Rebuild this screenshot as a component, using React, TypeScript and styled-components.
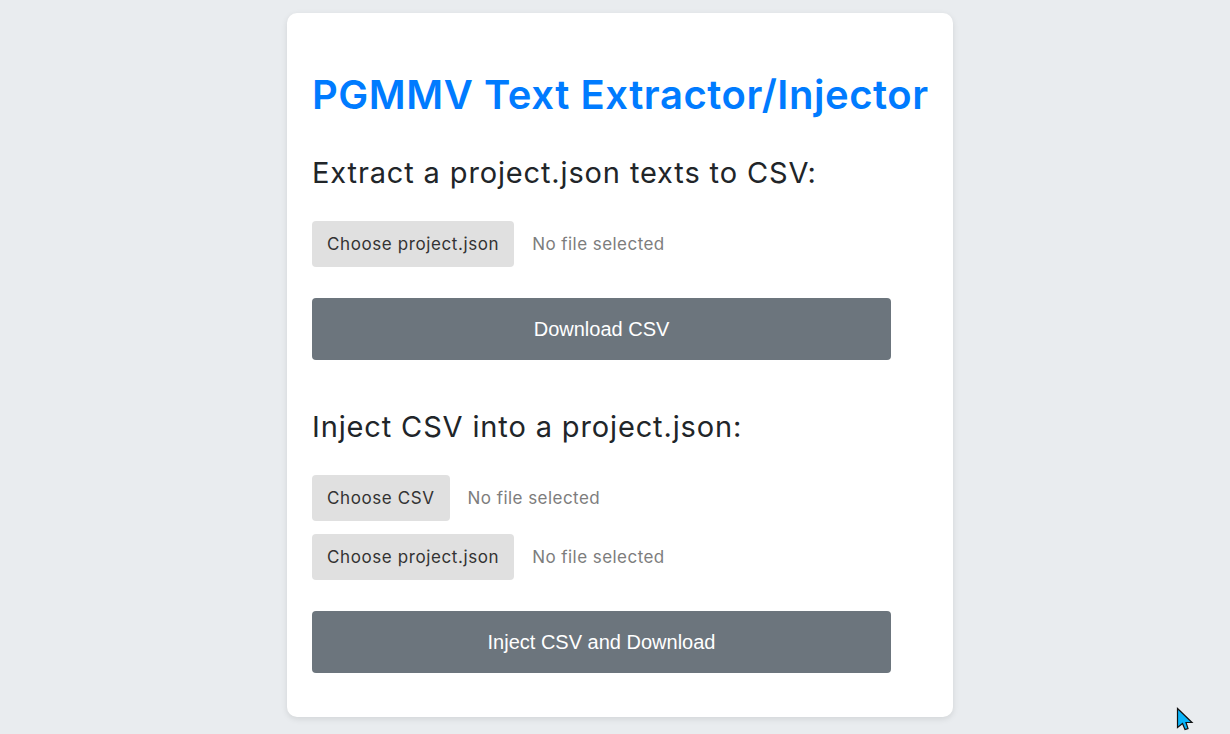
import React from "react";
import styled, { createGlobalStyle } from "styled-components";

const Global = createGlobalStyle`
  html, body { margin: 0; padding: 0; height: 100%; background: #e9ecef; overflow: hidden; }
  body { font-family: "Inter", "Open Sans", sans-serif; }
`;
const Page = styled.div`
  position: relative; width: 1230px; height: 734px; padding: 13px 0 0 10px; box-sizing: border-box;
  display: flex; flex-direction: column; align-items: center;
`;
const Card = styled.main`
  width: 666px; height: 704px; box-sizing: border-box; background: #fff; border-radius: 10px;
  box-shadow: 0 2px 6px rgba(0,0,0,.1); padding: 0 25px;
  display: flex; flex-direction: column; align-items: flex-start;
`;
const Title = styled.h1`
  margin: 54px 0 0; height: 56px; line-height: 56px; font-size: 40px; font-weight: 600; letter-spacing: 0.55px; color: #007bff; white-space: nowrap;
`;
const Heading = styled.h2<{ $top: number }>`
  margin: ${p => p.$top}px 0 0; height: 44px; line-height: 44px; font-size: 29px; font-weight: 400; letter-spacing: 0.86px; color: #212529; white-space: nowrap;
`;
const FileRow = styled.label<{ $top: number }>`
  margin-top: ${p => p.$top}px; display: flex; align-items: center; gap: 18px; height: 46px;
`;
const Choose = styled.span`
  height: 46px; padding: 0 15px; display: flex; align-items: center; box-sizing: border-box;
  background: #e0e0e0; border-radius: 4px; font-size: 17px; letter-spacing: 0.6px; color: #333;
`;
const Status = styled.span`font-size: 17px; letter-spacing: 0.45px; color: #7d7d7d;`;
const Action = styled.button<{ $top: number }>`
  margin-top: ${p => p.$top}px; width: 579px; height: 62px; border: 0; border-radius: 4px; background: #6c757d; color: #fff;
  font: 400 20px "Liberation Sans", Arial, sans-serif;
`;
const Cursor = styled.svg`position: absolute; left: 1176px; top: 707px;`;

export default function App() {
  return (
    <Page>
      <Global />
      <Card>
        <Title>PGMMV Text Extractor/Injector</Title>
        <Heading $top={28}>Extract a project.json texts to CSV:</Heading>
        <FileRow $top={26}><Choose>Choose project.json</Choose><Status>No file selected</Status></FileRow>
        <Action $top={31}>Download CSV</Action>
        <Heading $top={45}>Inject CSV into a project.json:</Heading>
        <FileRow $top={26}><Choose>Choose CSV</Choose><Status>No file selected</Status></FileRow>
        <FileRow $top={13}><Choose>Choose project.json</Choose><Status>No file selected</Status></FileRow>
        <Action $top={31}>Inject CSV and Download</Action>
      </Card>
      <Cursor width="18" height="25" viewBox="0 0 18 25"><path d="M1.5 1.5V20.5L6.5 16.5L9 22.5L12 21.5L10 15.5H16z" fill="#0ab4fa" stroke="#111" strokeWidth="1.2" /></Cursor>
    </Page>
  );
}
